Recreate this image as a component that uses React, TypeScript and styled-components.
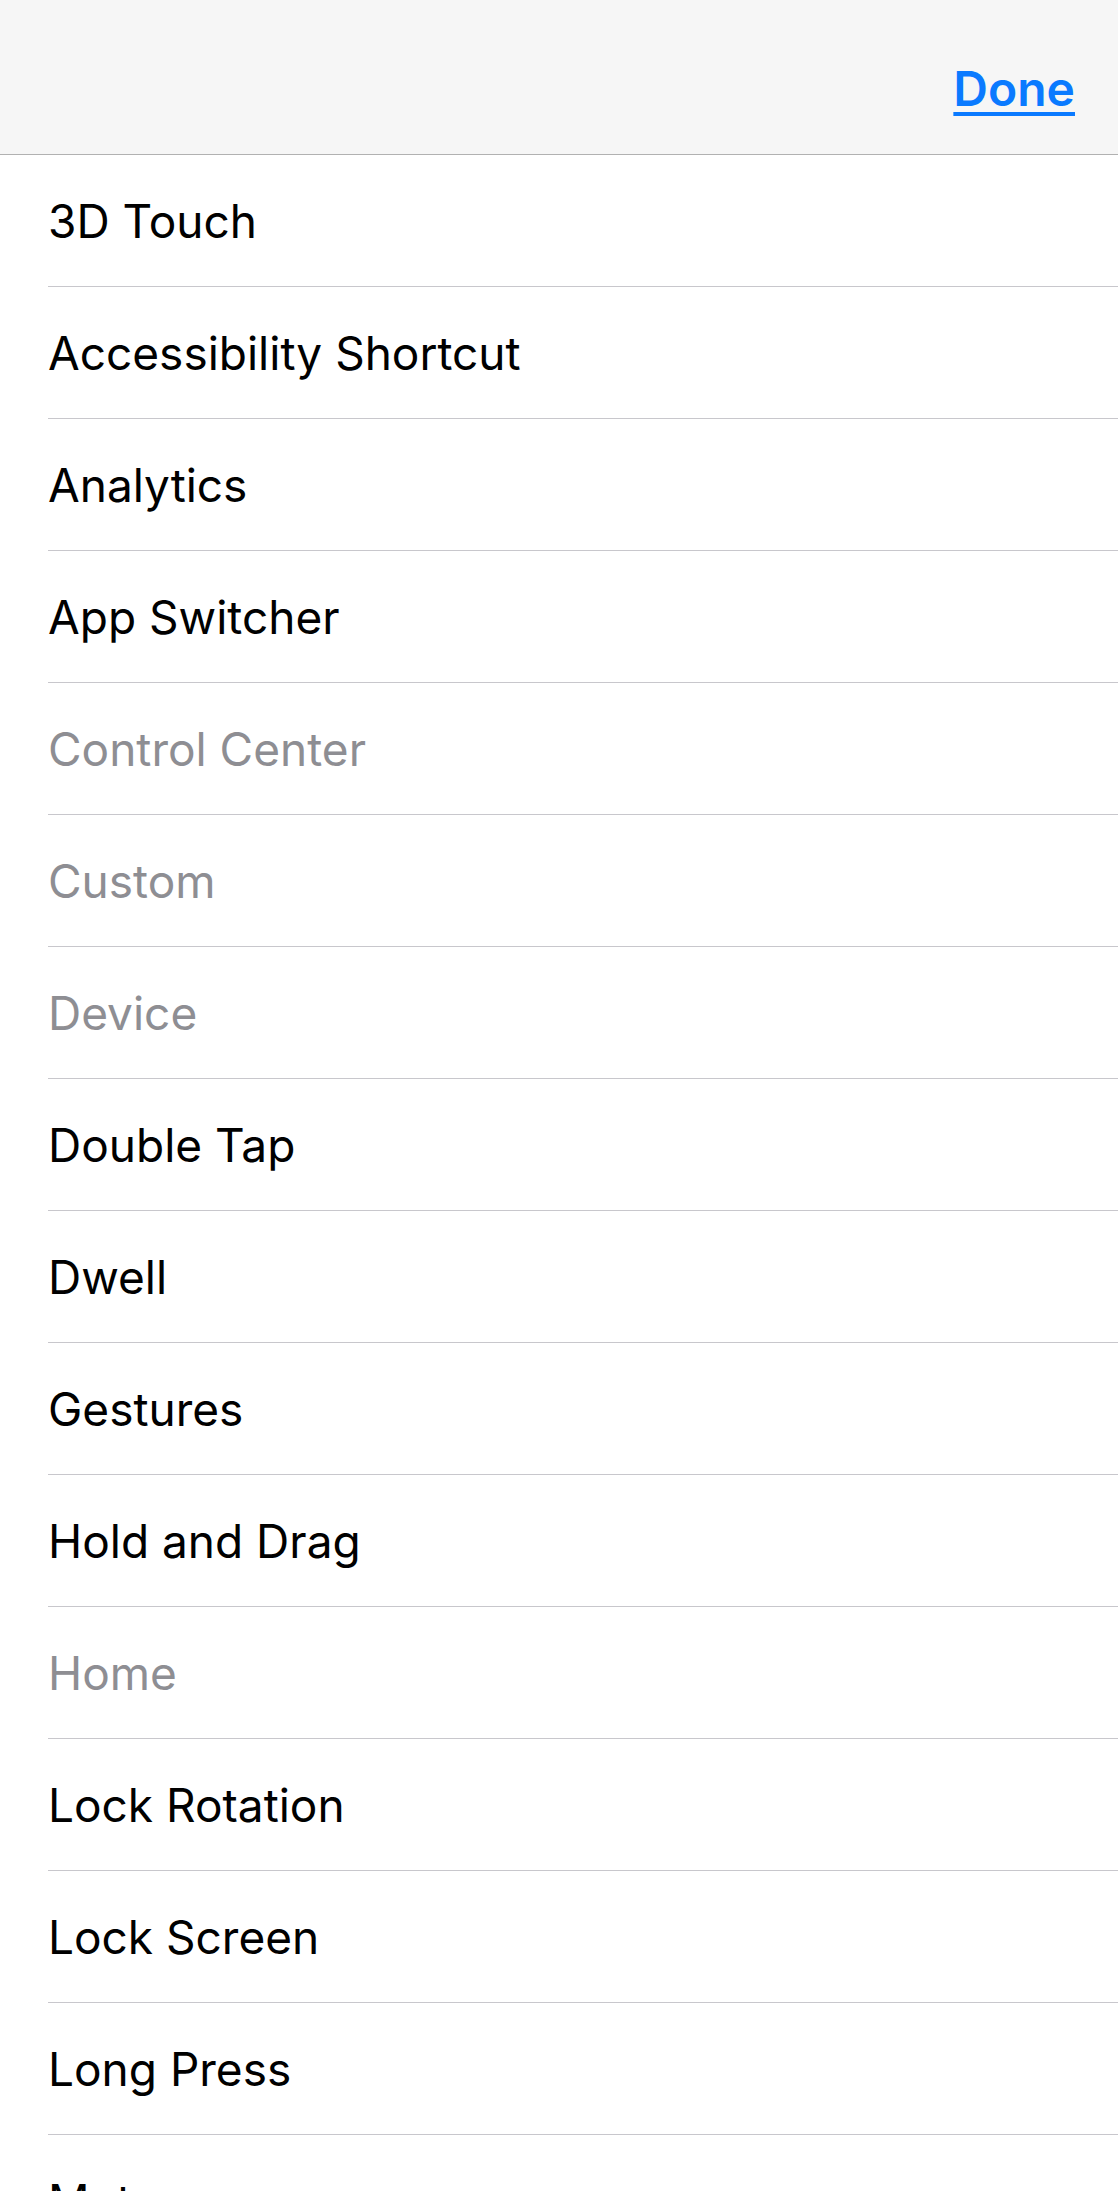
import React from 'react';
import styled, { createGlobalStyle } from 'styled-components';

const GlobalStyle = createGlobalStyle`
  html, body {
    margin: 0;
    padding: 0;
    background: #ffffff;
  }
  body {
    font-family: Inter, "Noto Sans", "Liberation Sans", sans-serif;
    -webkit-font-smoothing: antialiased;
  }
`;

const Screen = styled.div`
  display: flex;
  flex-direction: column;
  width: 1118px;
  height: 2191px;
  overflow: hidden;
  background: #ffffff;
`;

const NavBar = styled.header`
  display: flex;
  align-items: flex-start;
  justify-content: flex-end;
  flex-shrink: 0;
  height: 155px;
  box-sizing: border-box;
  padding: 57px 43px 0 0;
  background: #f6f6f6;
  border-bottom: 1px solid #b1b1b1;
`;

const DoneButton = styled.a`
  font-size: 48px;
  font-weight: 600;
  line-height: 64px;
  color: #0a7aff;
  text-decoration: underline;
  text-decoration-thickness: 4px;
  text-underline-offset: 6px;
  cursor: pointer;
`;

const List = styled.ul`
  display: flex;
  flex-direction: column;
  margin: 0;
  padding: 0 0 0 48px;
  list-style: none;
`;

const Row = styled.li<{ disabled?: boolean }>`
  display: flex;
  align-items: center;
  flex-shrink: 0;
  height: 131px;
  border-bottom: 1px solid #c8c7cc;
  font-size: 46px;
  color: ${({ disabled }) => (disabled ? '#8e8e93' : '#000000')};
`;

const items: { label: string; disabled?: boolean }[] = [
  { label: '3D Touch' },
  { label: 'Accessibility Shortcut' },
  { label: 'Analytics' },
  { label: 'App Switcher' },
  { label: 'Control Center', disabled: true },
  { label: 'Custom', disabled: true },
  { label: 'Device', disabled: true },
  { label: 'Double Tap' },
  { label: 'Dwell' },
  { label: 'Gestures' },
  { label: 'Hold and Drag' },
  { label: 'Home', disabled: true },
  { label: 'Lock Rotation' },
  { label: 'Lock Screen' },
  { label: 'Long Press' },
  { label: 'Mute' },
];

export default function App() {
  return (
    <Screen>
      <GlobalStyle />
      <NavBar>
        <DoneButton>Done</DoneButton>
      </NavBar>
      <List>
        {items.map((item) => (
          <Row key={item.label} disabled={item.disabled}>
            {item.label}
          </Row>
        ))}
      </List>
    </Screen>
  );
}
